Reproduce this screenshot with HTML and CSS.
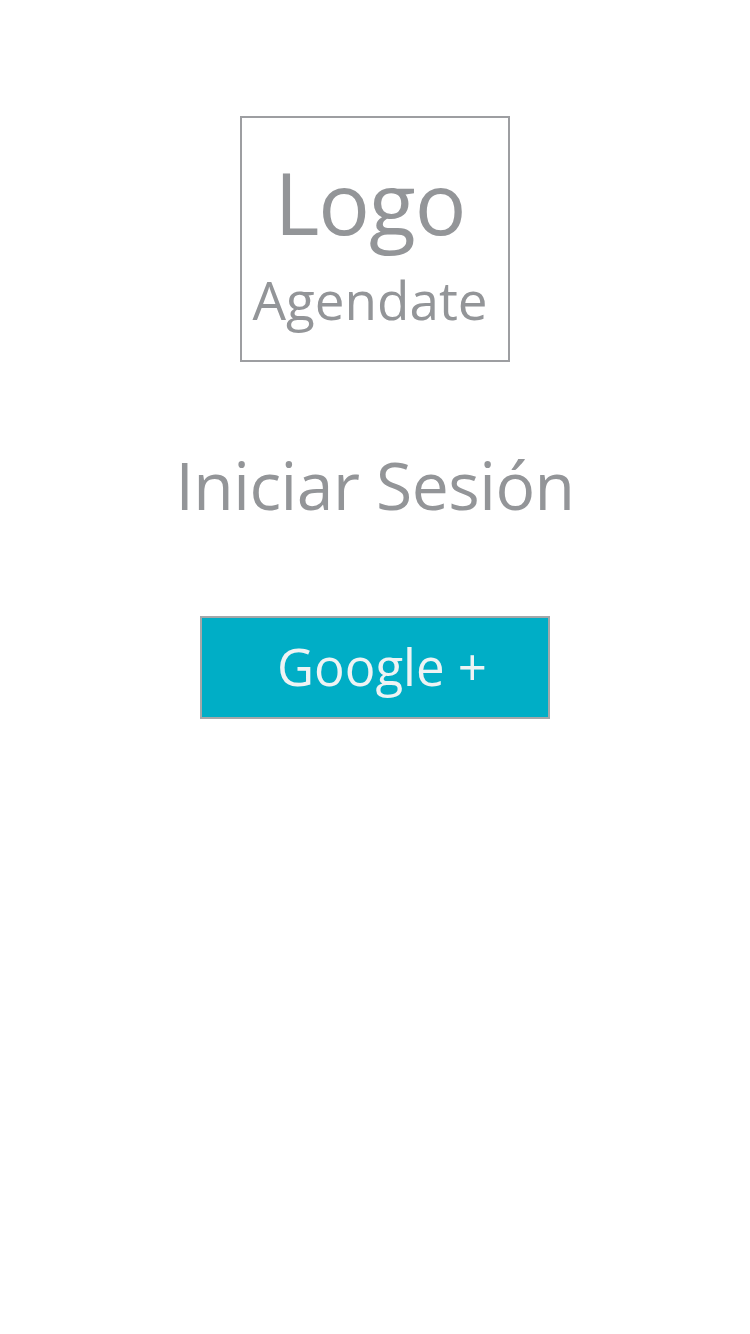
FILE: index.html
```html
<!DOCTYPE html>
<html lang="es">
<head>
<meta charset="utf-8">
<title>Agendate - Iniciar Sesión</title>
<link rel="stylesheet" href="styles.css">
</head>
<body>
<main class="page">
  <div class="logo-box">
    <div class="logo-title">Logo</div>
    <div class="logo-sub">Agendate</div>
  </div>
  <h1 class="heading">Iniciar Sesión</h1>
  <button class="google-btn" type="button">Google +</button>
</main>
</body>
</html>
```

FILE: styles.css
```css
html, body {
  margin: 0;
  padding: 0;
  background: #ffffff;
}
body {
  font-family: "Open Sans", "Noto Sans", sans-serif;
  color: #939598;
}
.page {
  width: 750px;
  display: flex;
  flex-direction: column;
  align-items: center;
  padding-top: 116px;
}
.logo-box {
  box-sizing: border-box;
  width: 270px;
  height: 246px;
  border: 2px solid #9d9ea1;
  display: flex;
  flex-direction: column;
  align-items: center;
  padding: 34px 10px 0 0;
}
.logo-title {
  font-size: 86px;
  line-height: 100px;
  letter-spacing: -1px;
}
.logo-sub {
  font-size: 53px;
  line-height: 60px;
  letter-spacing: 0;
  margin-top: 18px;
}
.heading {
  margin: 82px 0 0;
  font-weight: 400;
  font-size: 66px;
  line-height: 80px;
  letter-spacing: -0.5px;
  color: #939598;
}
.google-btn {
  margin-top: 92px;
  box-sizing: border-box;
  width: 350px;
  height: 103px;
  border: 2px solid #a5a7a9;
  background: #00aec6;
  color: #eef3f4;
  font-family: "Open Sans", "Noto Sans", sans-serif;
  font-size: 51px;
  letter-spacing: 0;
  padding: 0 0 4px 14px;
  cursor: pointer;
}
```
